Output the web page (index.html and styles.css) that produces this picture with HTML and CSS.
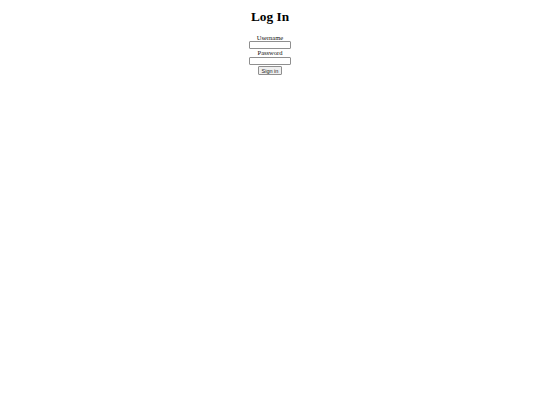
FILE: index.html
```html
<!DOCTYPE html>
<html>
<head>
<meta charset="utf-8">
<title>Log In</title>
<link rel="stylesheet" href="styles.css">
</head>
<body>
<h1 class="title">Log In</h1>
<form class="login">
  <label class="field-label" for="username">Username</label>
  <input class="field-input" id="username" type="text">
  <label class="field-label" for="password">Password</label>
  <input class="field-input field-input-last" id="password" type="password">
  <button class="submit" type="submit">Sign in</button>
</form>
</body>
</html>
```
FILE: styles.css
```css
html, body {
  margin: 0;
  padding: 0;
  background: #fff;
  color: #000;
  font-family: "Liberation Serif", "Times New Roman", serif;
}
.title {
  margin: 9.2px 0 0;
  font-size: 13.3px;
  line-height: 15px;
  font-weight: bold;
  text-align: center;
}
.login {
  margin: 9.4px 0 0;
  display: flex;
  flex-direction: column;
  align-items: center;
}
.field-label {
  display: block;
  font-size: 6.5px;
  line-height: 7px;
  color: #111;
}
.field-input {
  display: block;
  box-sizing: border-box;
  width: 42px;
  height: 8px;
  margin: 0.4px 0 0;
  padding: 0;
  border: 1px solid #8f8f8f;
  border-radius: 1px;
  background: #fff;
}
.field-input-last {
  margin-top: 1px;
}
.submit {
  display: block;
  box-sizing: border-box;
  width: 24px;
  height: 8.7px;
  margin: 1.3px 0 0;
  padding: 0;
  border: 1px solid #8f8f8f;
  border-radius: 1px;
  background: #efefef;
  color: #222;
  font-family: "Liberation Sans", Arial, sans-serif;
  font-size: 5.5px;
  line-height: 6px;
}
```
